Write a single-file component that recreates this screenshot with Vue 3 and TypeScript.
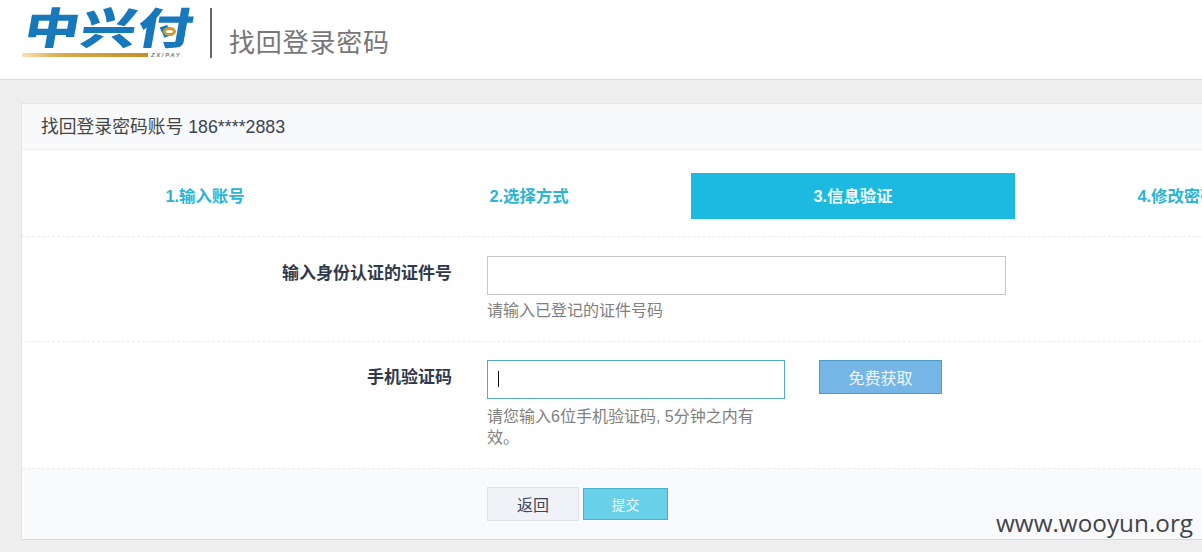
<script setup lang="ts">
const steps: string[] = ['1.输入账号', '2.选择方式', '3.信息验证', '4.修改密码']
const activeStep = 2
</script>

<template>
  <div class="page">
    <header class="top">
      <div class="logo">
        <span class="logo-text">中兴付</span>
        <span class="coin"></span>
        <div class="logo-foot"><span class="bar"></span><span class="pay">ZX/PAY</span></div>
      </div>
      <span class="divider"></span>
      <h1 class="heading">找回登录密码</h1>
    </header>
    <main class="card">
      <div class="card-title">找回登录密码账号 <span class="acct">186****2883</span></div>
      <div class="steps">
        <div v-for="(s, i) in steps" :key="s" class="step" :class="{ on: i === activeStep }">{{ s }}</div>
      </div>
      <div class="row row-a">
        <label class="lab">输入身份认证的证件号</label>
        <div class="field">
          <input class="inp inp-long" type="text" />
          <p class="hint">请输入已登记的证件号码</p>
        </div>
      </div>
      <div class="row row-b">
        <label class="lab">手机验证码</label>
        <div class="field">
          <div class="code-line">
            <div class="code-wrap">
              <input class="inp inp-code" type="text" />
              <span class="caret"></span>
            </div>
            <button class="get" type="button">免费获取</button>
          </div>
          <p class="hint hint-wrap">请您输入6位手机验证码, 5分钟之内有效。</p>
        </div>
      </div>
      <div class="foot">
        <button class="back" type="button">返回</button>
        <button class="submit" type="button">提交</button>
      </div>
    </main>
    <span class="mark">www.wooyun.org</span>
  </div>
</template>

<style>
html, body { margin: 0; overflow: hidden; background: #eeeeee; }
</style>

<style scoped>
.page {
  position: relative;
  width: 1202px;
  height: 552px;
  overflow: hidden;
  background: #eeeeee;
  font-family: "Liberation Sans", "Noto Sans CJK SC", sans-serif;
}
.top {
  height: 79px;
  background: #fff;
  border-bottom: 1px solid #dcdcdc;
  display: flex;
  align-items: flex-start;
}
.logo {
  position: relative;
  width: 188px;
  margin-left: 22px;
  height: 79px;
  flex: none;
}
.logo-text {
  position: absolute;
  left: 8px;
  top: 0;
  font: 900 55px/64px "Noto Sans CJK SC", sans-serif;
  color: #1778bb;
  letter-spacing: 1.5px;
  transform: skewX(-10deg) scaleY(.78);
  transform-origin: left top;
  white-space: nowrap;
}
.coin {
  position: absolute;
  left: 141px;
  top: 27px;
  width: 7px;
  height: 3px;
  border: 3px solid #cf9a2c;
  border-radius: 50%;
  background: #fff;
}
.logo-foot {
  position: absolute;
  left: 0;
  top: 51px;
  display: flex;
  align-items: center;
  gap: 3px;
}
.bar {
  width: 126px;
  height: 4px;
  background: linear-gradient(90deg, #f3e2b8 0%, #d9ac4c 30%, #c2902a 100%);
}
.pay {
  font: italic 700 6px/8px "Liberation Sans", sans-serif;
  letter-spacing: 1.6px;
  color: #777;
}
.divider {
  width: 2px;
  height: 50px;
  margin-top: 8px;
  background: #666;
  flex: none;
}
.heading {
  margin: 23px 0 0 17px;
  font: 400 26px/36px "Noto Sans CJK SC", sans-serif;
  letter-spacing: .8px;
  color: #777;
}
.card {
  position: absolute;
  left: 21px;
  top: 103px;
  width: 1340px;
  height: 437px;
  box-sizing: border-box;
  background: #fff;
  border: 1px solid #e2e4e8;
  border-right: 0;
  border-bottom: 1px solid #d9d9d9;
  display: flex;
  flex-direction: column;
}
.card-title {
  height: 46px;
  box-sizing: border-box;
  padding-left: 19px;
  background: #f8f9fb;
  border-bottom: 1px solid #eceef1;
  font-size: 17.8px;
  line-height: 47px;
  color: #444;
}
.acct { color: #3a4350; }
.steps {
  height: 87px;
  box-sizing: border-box;
  padding: 23px 0 0 21px;
  display: grid;
  grid-template-columns: repeat(4, 324px);
  grid-auto-rows: 46px;
  border-bottom: 1px dashed #eaedf0;
}
.step {
  text-align: center;
  font-size: 16.4px;
  font-weight: 700;
  line-height: 46px;
  color: #2bb4d6;
}
.step.on { background: #1cbae0; color: #f2fbfe; }
.row {
  display: flex;
  box-sizing: border-box;
  border-bottom: 1px dashed #eaedf0;
}
.row-a { height: 105px; padding-top: 19px; }
.row-b { height: 127px; padding-top: 18px; }
.lab {
  width: 430px;
  flex: none;
  text-align: right;
  font-size: 17px;
  font-weight: 700;
  line-height: 36px;
  color: #2f3a4c;
}
.field { margin-left: 35px; }
.inp {
  display: block;
  box-sizing: border-box;
  height: 39px;
  background: #fff;
  outline: none;
  padding: 0 10px;
}
.inp-long { width: 519px; border: 1px solid #c6c6c6; }
.inp-code { width: 298px; border: 1px solid #56abc2; }
.hint {
  margin: 5px 0 0;
  font-size: 16px;
  line-height: 22px;
  color: #808080;
}
.hint-wrap { width: 270px; margin-top: 7px; line-height: 21px; }
.code-line { display: flex; align-items: flex-start; gap: 34px; }
.code-wrap { position: relative; }
.caret {
  position: absolute;
  left: 11px;
  top: 11px;
  width: 1px;
  height: 16px;
  background: #111;
}
.get {
  width: 123px;
  height: 34px;
  box-sizing: border-box;
  padding: 0;
  background: #76b6e6;
  border: 1px solid #4d9cc6;
  color: #eef6fc;
  font: 16px "Liberation Sans", "Noto Sans CJK SC", sans-serif;
}
.foot {
  flex: 1;
  background: #f9fafc;
  padding: 18px 0 0 465px;
  display: flex;
  align-items: flex-start;
  gap: 4px;
}
.back {
  width: 92px;
  height: 34px;
  box-sizing: border-box;
  padding: 0;
  background: #f1f2f7;
  border: 1px solid #e1e2e6;
  color: #3d4454;
  font: 16px "Liberation Sans", "Noto Sans CJK SC", sans-serif;
}
.submit {
  width: 85px;
  height: 32px;
  margin-top: 1px;
  box-sizing: border-box;
  padding: 0;
  background: #69d0ea;
  border: 1px solid #45b2cb;
  color: #eaf9fd;
  font: 14px "Liberation Sans", "Noto Sans CJK SC", sans-serif;
}
.mark {
  position: absolute;
  left: 996px;
  top: 507px;
  font: 24.3px/32px "Open Sans", sans-serif;
  color: #414349;
}
</style>
